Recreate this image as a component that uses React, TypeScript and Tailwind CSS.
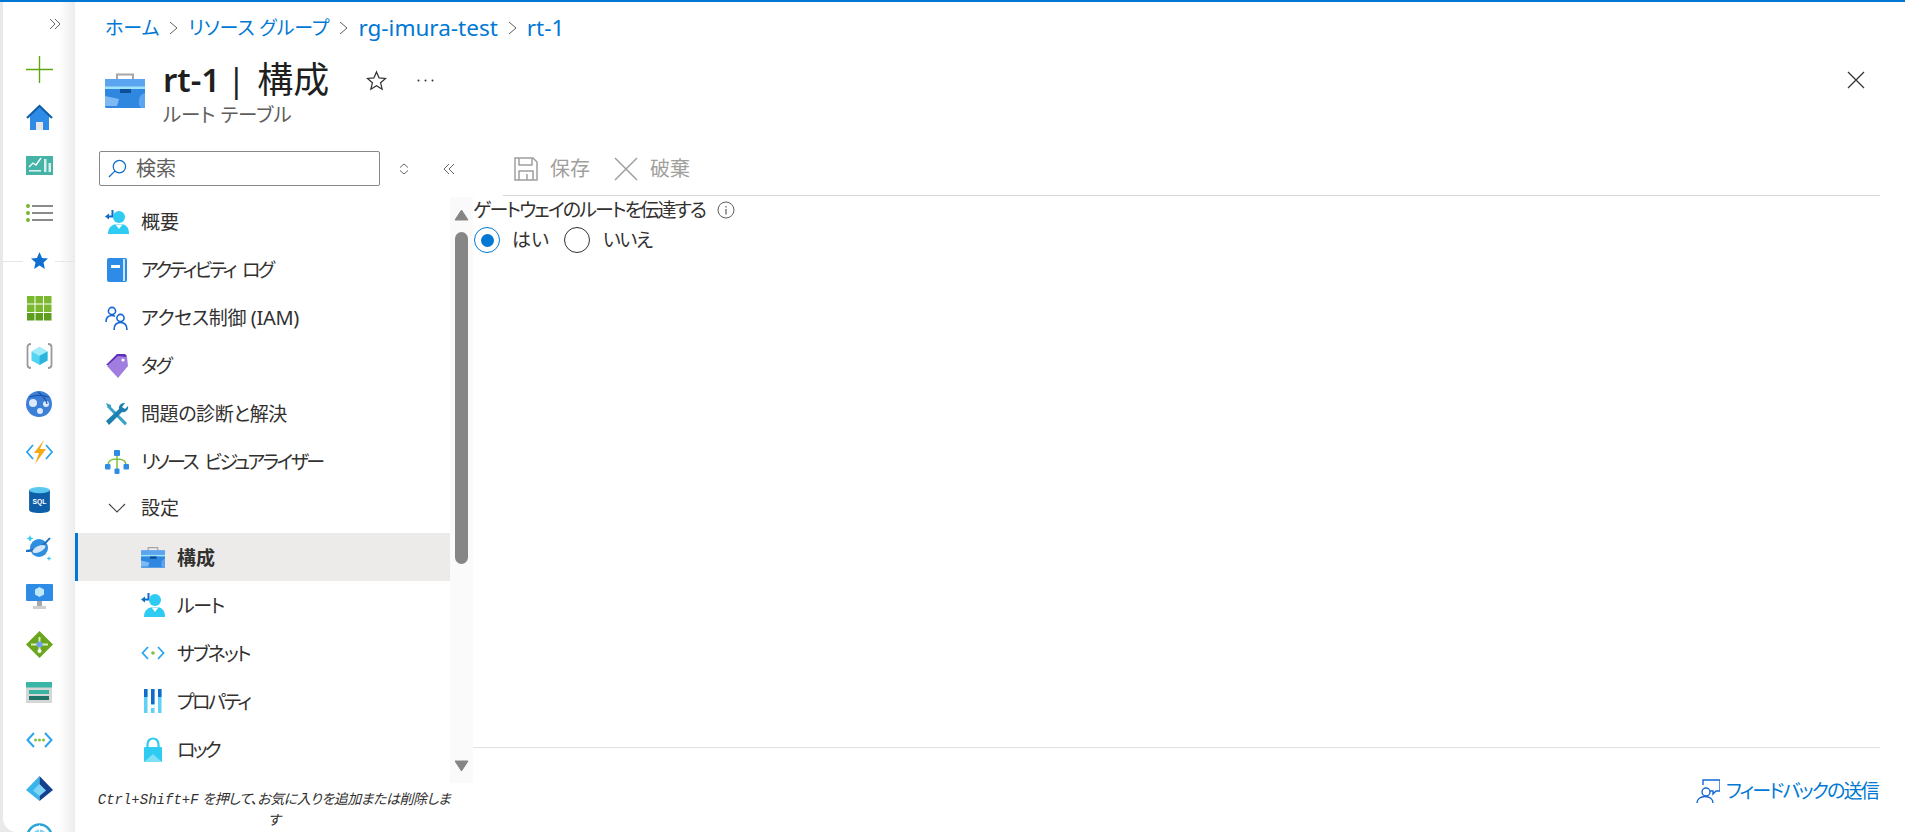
import React from "react";

type P = { className?: string };

const Bag = ({ className = "w-[40px] h-[36px]" }: P) => (
  <svg viewBox="0 0 40 36" className={className}>
    <path d="M12 8V2.500h16V8" fill="none" stroke="#a6a6a6" strokeWidth="2" />
    <rect x="0" y="7" width="40" height="29" rx="1.500" fill="#2f87e0" />
    <rect x="0" y="7" width="40" height="9" fill="#5ba4ef" />
    <rect x="0" y="14.500" width="40" height="2.500" fill="#9fe3f7" />
    <rect x="15" y="17" width="11" height="4" fill="#0f4f94" />
    <path d="M0 24l14 3-2 7H0z" fill="#7db9f2" />
    <path d="M40 21a7 7 0 0 0-6 8 7 7 0 0 0 2 7h4z" fill="#5ba4ef" />
  </svg>
);

const Route = ({ className = "w-[24px] h-[24px]" }: P) => (
  <svg viewBox="0 0 24 24" className={className}>
    <path d="M7.500 0v6.500H3" fill="none" stroke="#0f6cc9" strokeWidth="2" />
    <path d="M0 6.500l4-3v6z" fill="#0f6cc9" />
    <circle cx="14" cy="7" r="6" fill="#2ecbf3" />
    <path d="M3 24c0-7 4-10 11-10s10 3 10 10z" fill="#2ecbf3" />
    <path d="M10.500 14.500h7L14 19z" fill="#fff" />
  </svg>
);

const Book = () => (
  <svg viewBox="0 0 20 24" className="w-[20px] h-[24px]">
    <rect x="0" y="0" width="20" height="24" rx="2" fill="#2f8ce6" />
    <rect x="16" y="1" width="2" height="22" fill="#c9e6fa" />
    <rect x="4" y="7" width="9" height="3" fill="#fff" />
  </svg>
);

const Iam = () => (
  <svg viewBox="0 0 24 24" className="w-[24px] h-[24px]" fill="none" stroke="#1567d3" strokeWidth="1.600">
    <circle cx="7" cy="5" r="3.600" />
    <path d="M1 16c0-4 2-6.500 6-6.500 1 0 2 .2 3 .7" />
    <circle cx="15.500" cy="12" r="3.600" />
    <path d="M9 24c0-5 2.500-7.500 6.500-7.500S22 19 22 24" />
  </svg>
);

const Tag = () => (
  <svg viewBox="0 0 22 24" className="w-[22px] h-[24px]">
    <path d="M0 11L11 0h8l2 2-10 10z" fill="#5f2fb8" />
    <path d="M1 12L12 2l9 1 1 9-10 12z" fill="#a27de0" />
    <circle cx="17" cy="6" r="1.600" fill="#fff" />
  </svg>
);

const Wrench = () => (
  <svg viewBox="0 0 24 24" className="w-[24px] h-[24px]">
    <path d="M4 3l18 18-2 2.500L2 5z" fill="#37a3c7" />
    <path d="M1 1l5 2 0 3-3 0z" fill="#37a3c7" />
    <path d="M19 1a5 5 0 0 0-5 6L1 19l3 4L17 10a5 5 0 0 0 6-6l-3 3-3-2 3-4z" fill="#1c7fb0" />
  </svg>
);

const Tree = () => (
  <svg viewBox="0 0 24 24" className="w-[24px] h-[24px]">
    <path d="M12 5v14M3 15c0-5 4-6 9-6s9 1 9 6" fill="none" stroke="#7fc241" strokeWidth="1.500" />
    <rect x="9" y="0" width="6" height="6" rx="1" fill="#2f8ce6" />
    <rect x="0" y="14" width="5.500" height="5.500" rx="1" fill="#2f8ce6" />
    <rect x="18.500" y="14" width="5.500" height="5.500" rx="1" fill="#2f8ce6" />
    <rect x="9.500" y="18.500" width="5" height="5.500" rx="1" fill="#2f8ce6" />
  </svg>
);

const Subnet = () => (
  <svg viewBox="0 0 24 14" className="w-[24px] h-[14px]" fill="none">
    <path d="M7 1L1.500 7 7 13M17 1l5.500 6L17 13" stroke="#2aa5f0" strokeWidth="1.800" />
    <circle cx="12" cy="7" r="1.800" fill="#7fc241" />
  </svg>
);

const Props = () => (
  <svg viewBox="0 0 20 24" className="w-[20px] h-[24px]">
    {[1, 8, 15].map((x, i) => (
      <React.Fragment key={x}>
        <rect x={x} y="0" width="3.500" height="24" fill="#5ed2f5" />
        <rect x={x} y="0" width="3.500" height={i === 1 ? 15 : 8} fill="#0f6cc9" />
      </React.Fragment>
    ))}
    <rect x="8" y="16" width="3.500" height="3" fill="#fff" />
  </svg>
);

const Lock = () => (
  <svg viewBox="0 0 20 25" className="w-[20px] h-[25px]">
    <path d="M4.500 11V7a5.500 5.500 0 0 1 11 0v4" fill="none" stroke="#2ecbf3" strokeWidth="2.200" />
    <rect x="1" y="10" width="18" height="15" rx="1" fill="#2ecbf3" />
    <path d="M1 25l9-8 9 8z" fill="#7de0f7" />
  </svg>
);

const Plus = () => (
  <svg viewBox="0 0 27 27" className="w-[27px] h-[27px]">
    <path d="M13.500 0v27M0 13.500h27" stroke="#5ea80d" strokeWidth="1.400" />
  </svg>
);

const Home = () => (
  <svg viewBox="0 0 27 27" className="w-[27px] h-[27px]">
    <path d="M4 12L13.500 3 23 12v14H4z" fill="#2f8ce6" />
    <path d="M1 14L13.500 2 26 14" fill="none" stroke="#0f5ea8" strokeWidth="2.200" />
    <rect x="10" y="18" width="7" height="8" fill="#e6e6e6" />
  </svg>
);

const Dash = () => (
  <svg viewBox="0 0 27 19" className="w-[27px] h-[19px]">
    <rect width="27" height="19" fill="#45b3a5" />
    <path d="M3 11l4-4 3 2 5-7" fill="none" stroke="#fff" strokeWidth="1.300" />
    <rect x="18" y="3" width="2.500" height="13" fill="#d7f0ec" />
    <rect x="22.500" y="7" width="2.500" height="9" fill="#d7f0ec" />
    <rect x="3" y="14" width="12" height="1.600" fill="#d7f0ec" />
  </svg>
);

const ListI = () => (
  <svg viewBox="0 0 27 18" className="w-[27px] h-[18px]">
    {[2, 9, 16].map((y) => (
      <React.Fragment key={y}>
        <circle cx="2" cy={y} r="1.900" fill="#6fb32a" />
        <rect x="6" y={y - 1} width="21" height="2" fill="#8a8a8a" />
      </React.Fragment>
    ))}
  </svg>
);

const StarI = () => (
  <svg viewBox="0 0 20 20" className="w-[17px] h-[17px]">
    <path d="M10 0l3 7 7 .6-5.300 4.700L16.300 20 10 15.800 3.700 20l1.600-7.700L0 7.600 7 7z" fill="#0f6fd1" />
  </svg>
);

const Grid = () => (
  <svg viewBox="0 0 25 25" className="w-[25px] h-[25px]">
    {[0, 8.500, 17].map((y) =>
      [0, 8.500, 17].map((x) => <rect key={x + "-" + y} x={x} y={y} width="7.500" height="7.500" fill={y > 10 ? "#5e9e1f" : "#7ab82f"} />)
    )}
  </svg>
);

const Cube = () => (
  <svg viewBox="0 0 27 26" className="w-[27px] h-[26px]">
    <path d="M5 1C3 1 1.500 2 1.500 4v18c0 2 1.500 3 3.500 3M22 1c2 0 3.500 1 3.500 3v18c0 2-1.500 3-3.500 3" fill="none" stroke="#9a9a9a" strokeWidth="1.800" />
    <path d="M13.500 4l8 4.500v9l-8 4.500-8-4.500v-9z" fill="#53d4f0" />
    <path d="M13.500 4l8 4.500-8 4.500-8-4.500z" fill="#a0ecfb" />
    <path d="M13.500 13l8-4.500v9l-8 4.500z" fill="#2bb5dd" />
  </svg>
);

const Globe = () => (
  <svg viewBox="0 0 26 26" className="w-[26px] h-[26px]">
    <circle cx="13" cy="13" r="13" fill="#3b7fd6" />
    <circle cx="7" cy="12" r="4" fill="#dbe9fa" />
    <circle cx="20" cy="13" r="3" fill="#dbe9fa" />
    <circle cx="14" cy="20" r="3" fill="#dbe9fa" />
    <path d="M3 6c6-2 14-2 20 0M12 1c4 3 8 7 9 12" fill="none" stroke="#1d57ad" strokeWidth="1.200" />
  </svg>
);

const Func = () => (
  <svg viewBox="0 0 27 24" className="w-[27px] h-[24px]">
    <path d="M7 5L1 12l6 7M20 5l6 7-6 7" fill="none" stroke="#2aa5f0" strokeWidth="1.800" />
    <path d="M18 0L8 13h5l-4 11 11-15h-6z" fill="#f5a818" />
  </svg>
);

const Sql = () => (
  <svg viewBox="0 0 20 25" className="w-[21px] h-[26px]">
    <path d="M0 3v19c0 1.600 4.500 3 10 3s10-1.400 10-3V3z" fill="#0f5ea8" />
    <ellipse cx="10" cy="3" rx="10" ry="3" fill="#5cc8ef" />
    <text x="10" y="16" textAnchor="middle" fontSize="6.500" fontWeight="700" fill="#fff" fontFamily="'Liberation Sans',sans-serif">SQL</text>
  </svg>
);

const Cosmos = () => (
  <svg viewBox="0 0 26 26" className="w-[26px] h-[26px]">
    <circle cx="13" cy="13" r="9" fill="#2e8ee0" />
    <path d="M0 16c8 0 18-5 24-13" fill="none" stroke="#1f6fc0" strokeWidth="2" />
    <ellipse cx="13" cy="14" rx="7" ry="3" fill="#d5e6f8" transform="rotate(-25 13 14)" />
    <path d="M4 0l1 2.500L7.500 3.500 5 4.500 4 7 3 4.500.5 3.500 3 2.500zM23 21l.7 1.800 1.800.7-1.800.7L23 26l-.7-1.800-1.800-.7 1.800-.7z" fill="#2ecbf3" />
  </svg>
);

const Vm = () => (
  <svg viewBox="0 0 27 25" className="w-[27px] h-[25px]">
    <rect width="27" height="17" rx="1" fill="#2f8ce6" />
    <path d="M13.500 3l4.500 2.500v5L13.500 13 9 10.500v-5z" fill="#bfe9fb" />
    <rect x="11" y="17" width="5" height="5" fill="#a8a8a8" />
    <rect x="7" y="22" width="13" height="3" fill="#cfcfcf" />
  </svg>
);

const Lb = () => (
  <svg viewBox="0 0 27 27" className="w-[27px] h-[27px]">
    <path d="M13.500 0L27 13.500 13.500 27 0 13.500z" fill="#6aa51e" />
    <path d="M5 13.500h17M13.500 6v12" stroke="#d8eebb" strokeWidth="2" />
    <circle cx="13.500" cy="13.500" r="3" fill="#6f9ff0" />
    <circle cx="13.500" cy="20" r="2" fill="#fff" />
  </svg>
);

const Storage = () => (
  <svg viewBox="0 0 26 21" className="w-[26px] h-[21px]">
    <rect width="26" height="21" fill="#d6d6d6" />
    <rect width="26" height="5.500" fill="#39b6a6" />
    <rect x="3" y="8" width="20" height="4" fill="#3ab3a3" />
    <rect x="3" y="14" width="20" height="4" fill="#1f7468" />
  </svg>
);

const Vnet = () => (
  <svg viewBox="0 0 27 16" className="w-[27px] h-[16px]" fill="none">
    <path d="M8 1L1.500 8 8 15M19 1l6.500 7L19 15" stroke="#2aa5f0" strokeWidth="2" />
    <circle cx="9.500" cy="8" r="1.500" fill="#7fc241" />
    <circle cx="13.500" cy="8" r="1.500" fill="#7fc241" />
    <circle cx="17.500" cy="8" r="1.500" fill="#7fc241" />
  </svg>
);

const Entra = () => (
  <svg viewBox="0 0 27 25" className="w-[27px] h-[25px]">
    <path d="M13.500 0L0 14l13.500 11z" fill="#39b5ee" />
    <path d="M13.500 0L27 14 13.500 25z" fill="#14408f" />
    <path d="M13.500 8L7 14.500l6.500 5.500 6.500-5.500z" fill="#7fd3f7" />
  </svg>
);

const K8s = () => (
  <svg viewBox="0 0 27 27" className="w-[27px] h-[27px]" fill="none">
    <circle cx="13.500" cy="13.500" r="12" stroke="#2aa5d8" strokeWidth="2.500" />
    <circle cx="13.500" cy="13.500" r="7" fill="#7fd3f0" />
    <path d="M13.500 2v23M2 13.500h23" stroke="#fff" strokeWidth="1" />
  </svg>
);

const railIcons: [React.ReactNode, number][] = [
  [<Grid />, 309],
  [<Cube />, 357],
  [<Globe />, 405],
  [<Func />, 453],
  [<Sql />, 501],
  [<Cosmos />, 549],
  [<Vm />, 597],
  [<Lb />, 645],
  [<Storage />, 693],
  [<Vnet />, 741],
  [<Entra />, 789],
  [<K8s />, 837],
];

const Slot = ({ children }: { children: React.ReactNode }) => (
  <div className="h-[48px] w-full shrink-0 flex items-center justify-center">{children}</div>
);

function Rail() {
  return (
    <div className="w-[75px] shrink-0 h-full flex bg-[#e9e9e9]">
      <div className="w-[72px] ml-[3px] h-full rounded-bl-[14px] overflow-hidden flex flex-col items-stretch bg-[linear-gradient(90deg,#ffffff_78%,#ececec_100%)]">
        <div className="h-[43px] shrink-0 flex items-center justify-end pr-[14px]">
          <svg viewBox="0 0 12 12" className="w-[12px] h-[12px]" fill="none" stroke="#555" strokeWidth="0.900">
            <path d="M1 1l5 5-5 5M6 1l5 5-5 5" />
          </svg>
        </div>
        <Slot><Plus /></Slot>
        <Slot><Home /></Slot>
        <Slot><Dash /></Slot>
        <Slot><ListI /></Slot>
        <div className="relative h-[48px] shrink-0 flex items-center justify-center -mt-[1px]">
          <div className="absolute left-0 right-0 top-[25px] h-px bg-[#e6e6e6]" />
          <div className="relative bg-white w-[32px] flex justify-center"><StarI /></div>
        </div>
        {railIcons.map(([ic, y]) => (
          <Slot key={y}>{ic}</Slot>
        ))}
      </div>
    </div>
  );
}

function Row({ icon, label, sub, active, tr = "" }: { icon: React.ReactNode; label: React.ReactNode; sub?: boolean; active?: boolean; tr?: string }) {
  return (
    <div
      className={`h-[48px] shrink-0 flex items-center ${sub ? "pl-[66px]" : "pl-[30px]"} ${
        active ? "bg-[#edebe9] border-l-[3px] border-[#0078d4] !pl-[63px]" : ""
      }`}
    >
      <span className="w-[24px] h-[26px] flex items-center justify-center shrink-0">{icon}</span>
      <span className={`ml-[12px] text-[19px] leading-[24px] whitespace-nowrap text-[#323130] ${tr} ${sub ? "mt-[2px]" : ""} ${active ? "font-bold" : ""}`}>
        {label}
      </span>
    </div>
  );
}

function Scrollbar() {
  return (
    <div className="w-[23px] shrink-0 h-full bg-[#fafafa] flex flex-col items-center">
      <svg viewBox="0 0 15 12" className="w-[15px] h-[12px] mt-[12px] shrink-0">
        <path d="M7.500 1L14 11H1z" fill="#858585" stroke="#858585" strokeLinejoin="round" />
      </svg>
      <div className="w-[13px] h-[332px] mt-[11px] rounded-[7px] bg-[#868686] shrink-0" />
      <svg viewBox="0 0 15 12" className="w-[15px] h-[12px] mt-[196px] shrink-0">
        <path d="M7.500 11L14 1H1z" fill="#858585" stroke="#858585" strokeLinejoin="round" />
      </svg>
    </div>
  );
}

function Nav() {
  return (
    <div className="w-[398px] shrink-0 flex flex-col">
      <div className="h-[35px] ml-[24px] flex items-center shrink-0">
        <div className="w-[281px] h-[35px] border border-[#8a8886] rounded-[2px] flex items-center pl-[8px]">
          <svg viewBox="0 0 20 20" className="w-[19px] h-[19px]" fill="none" stroke="#0f6cc9" strokeWidth="1.300">
            <circle cx="12" cy="8" r="6.500" />
            <path d="M7.500 12.500L1 19" />
          </svg>
          <span className="ml-[9px] text-[20px] leading-[24px] text-[#605e5c]">検索</span>
        </div>
        <svg viewBox="0 0 10 12" className="w-[10px] h-[12px] ml-[19px]" fill="none" stroke="#555" strokeWidth="0.900">
          <path d="M1 4.500L5 1l4 3.500M1 7.500L5 11l4-3.500" />
        </svg>
        <svg viewBox="0 0 12 12" className="w-[12px] h-[12px] ml-[34px]" fill="none" stroke="#555" strokeWidth="0.900">
          <path d="M6 1L1 6l5 5M11 1L6 6l5 5" />
        </svg>
      </div>
      <div className="h-[586px] mt-[11px] flex shrink-0">
        <div className="flex-1 flex flex-col pt-[1px] min-w-0">
          <Row icon={<Route />} label="概要" />
          <Row icon={<Book />} label="アクティビティ ログ" tr="tracking-[-2.7px] [word-spacing:5px]" />
          <Row icon={<Iam />} label={<>アクセス制御 <span className="text-[20px]">(IAM)</span></>} tr="tracking-[-0.3px]" />
          <Row icon={<Tag />} label="タグ" tr="tracking-[-2px]" />
          <Row icon={<Wrench />} label="問題の診断と解決" tr="tracking-[-0.4px]" />
          <Row icon={<Tree />} label="リソース ビジュアライザー" tr="tracking-[-2.5px] [word-spacing:5px]" />
          <div className="h-[47px] shrink-0 flex items-center pl-[30px] pb-[4px]">
            <span className="w-[24px] flex justify-center">
              <svg viewBox="0 0 18 10" className="w-[18px] h-[10px]" fill="none" stroke="#444" strokeWidth="1.100">
                <path d="M1 1l8 8 8-8" />
              </svg>
            </span>
            <span className="ml-[12px] text-[19px] leading-[24px] text-[#323130]">設定</span>
          </div>
          <Row icon={<Bag className="w-[24px] h-[24px]" />} label="構成" sub active />
          <Row icon={<Route />} label="ルート" sub tr="tracking-[-1.5px]" />
          <Row icon={<Subnet />} label="サブネット" sub tr="tracking-[-2px]" />
          <Row icon={<Props />} label="プロパティ" sub tr="tracking-[-2.4px]" />
          <Row icon={<Lock />} label="ロック" sub tr="tracking-[-3px]" />
        </div>
        <Scrollbar />
      </div>
      <p className="mt-[6px] px-[19px] text-center italic text-[14px] leading-[19px] text-[#323130]">
        <span className="font-['Liberation_Mono',monospace]">Ctrl+Shift+F</span>{" "}
        <span className="tracking-[-0.5px]">を押して、お気に入りを追加または削除します</span>
      </p>
    </div>
  );
}

function Crumb({ children, latin }: { children: React.ReactNode; latin?: boolean }) {
  return <span className={`text-[#0078d4] ${latin ? "text-[22.5px]" : "text-[19px]"}`}>{children}</span>;
}

const Sep = () => (
  <svg viewBox="0 0 9 14" className="w-[9px] h-[14px] mx-[10px]" fill="none" stroke="#605e5c" strokeWidth="1">
    <path d="M1 1l7 6-7 6" />
  </svg>
);

function Radio({ on }: { on?: boolean }) {
  return (
    <span className={`w-[26px] h-[26px] rounded-full border flex items-center justify-center ${on ? "border-[#0078d4]" : "border-[#323130]"}`}>
      {on && <span className="w-[13px] h-[13px] rounded-full bg-[#0078d4]" />}
    </span>
  );
}

function Content() {
  return (
    <div className="flex-1 min-w-0 flex flex-col">
      <div className="h-[36px] ml-[30px] mr-[25px] border-b border-[#d6d6d6] flex items-center shrink-0 text-[#a19f9d] text-[20px] leading-[24px] pb-[8px] box-content">
        <svg viewBox="0 0 24 24" className="w-[24px] h-[24px] ml-[11px]" fill="none" stroke="#a19f9d" strokeWidth="1.500">
          <path d="M1 1h18l4 4v18H1z" />
          <path d="M5 1v7h13V1M5 23V14h14v9M13 17v6" />
        </svg>
        <span className="ml-[12px]">保存</span>
        <svg viewBox="0 0 24 24" className="w-[24px] h-[24px] ml-[24px]" fill="none" stroke="#a19f9d" strokeWidth="1.500">
          <path d="M1 1l22 22M23 1L1 23" />
        </svg>
        <span className="ml-[12px]">破棄</span>
      </div>
      <div className="flex-1 flex flex-col min-h-0 text-[#323130]">
        <div className="flex items-center h-[24px] mt-[2px]">
          <span className="text-[19px] leading-[24px] tracking-[-1.9px] whitespace-nowrap">ゲートウェイのルートを伝達する</span>
          <svg viewBox="0 0 18 18" className="w-[18px] h-[18px] ml-[12px]" fill="none" stroke="#605e5c" strokeWidth="1">
            <circle cx="9" cy="9" r="8" />
            <path d="M9 8v5.500M9 5v1.500" strokeWidth="1.200" />
          </svg>
        </div>
        <div className="flex items-center h-[28px] mt-[4px] ml-[1px]">
          <Radio on />
          <span className="ml-[12px] text-[19px] leading-[24px]">はい</span>
          <span className="ml-[15px]"><Radio /></span>
          <span className="ml-[13px] text-[19px] leading-[24px] tracking-[-1.5px]">いいえ</span>
        </div>
      </div>
      <div className="h-[85px] shrink-0 mr-[25px] border-t border-[#e1e1e1] flex items-start justify-end pt-[31px] pr-[2px]">
        <svg viewBox="0 0 24 24" className="w-[24px] h-[24px]" fill="none" stroke="#1567d3" strokeWidth="1.400">
          <path d="M7 6V1h17v11h-4l-3 3v-3h-3" />
          <circle cx="10" cy="13" r="4" />
          <path d="M1 24c0-4 3.500-6.500 8-6.500s8 2.500 8 6.500" />
        </svg>
        <span className="ml-[6px] text-[19px] leading-[24px] tracking-[-1.8px] text-[#0078d4] whitespace-nowrap">フィードバックの送信</span>
      </div>
    </div>
  );
}

export default function App() {
  return (
    <div className="w-full h-[832px] overflow-hidden flex flex-col bg-white [font-feature-settings:'palt'] font-['Noto_Sans','Noto_Sans_CJK_JP',sans-serif]">
      <div className="h-[2px] bg-[#0078d4] shrink-0" />
      <div className="flex-1 flex min-h-0">
        <Rail />
        <div className="flex-1 min-w-0 flex flex-col">
          <div className="h-[149px] shrink-0 pl-[30px] flex flex-col">
            <div className="flex items-center h-[26px] mt-[13px] leading-[24px] whitespace-nowrap">
              <Crumb>ホーム</Crumb>
              <Sep />
              <Crumb>リソース グループ</Crumb>
              <Sep />
              <Crumb latin>rg-imura-test</Crumb>
              <Sep />
              <Crumb latin>rt-1</Crumb>
            </div>
            <div className="flex mt-[15px] pr-[25px]">
              <div className="mt-[16px]">
                <Bag />
              </div>
              <div className="ml-[18px] flex flex-col mt-[2px]">
                <div className="flex items-center h-[44px]">
                  <span className="text-[33px] leading-[44px] font-semibold text-[#201f1e]">rt-1</span>
                  <span className="text-[33px] leading-[44px] text-[#201f1e] ml-[7px] mr-[12px]">|</span>
                  <span className="text-[36px] leading-[44px] text-[#201f1e]">構成</span>
                  <svg viewBox="0 0 22 22" className="w-[21px] h-[21px] ml-[37px]" fill="none" stroke="#323130" strokeWidth="1.300">
                    <path d="M11 2l2.700 6.300 6.800.6-5.200 4.500 1.600 6.700L11 16.500 5.100 20.100l1.600-6.700L1.500 8.900l6.800-.6z" />
                  </svg>
                  <svg viewBox="0 0 17 3" className="w-[17px] h-[3px] ml-[30px]" fill="#323130">
                    <circle cx="1.500" cy="1.500" r="1" />
                    <circle cx="8.500" cy="1.500" r="1" />
                    <circle cx="15.500" cy="1.500" r="1" />
                  </svg>
                </div>
                <span className="text-[19.5px] leading-[24px] text-[#605e5c] mt-[1px] whitespace-nowrap">ルート テーブル</span>
              </div>
              <svg viewBox="0 0 18 18" className="w-[18px] h-[18px] ml-auto mt-[15px] mr-[15px]" fill="none" stroke="#323130" strokeWidth="1.200">
                <path d="M1 1l16 16M17 1L1 17" />
              </svg>
            </div>
          </div>
          <div className="flex-1 flex min-h-0">
            <Nav />
            <Content />
          </div>
        </div>
      </div>
    </div>
  );
}
